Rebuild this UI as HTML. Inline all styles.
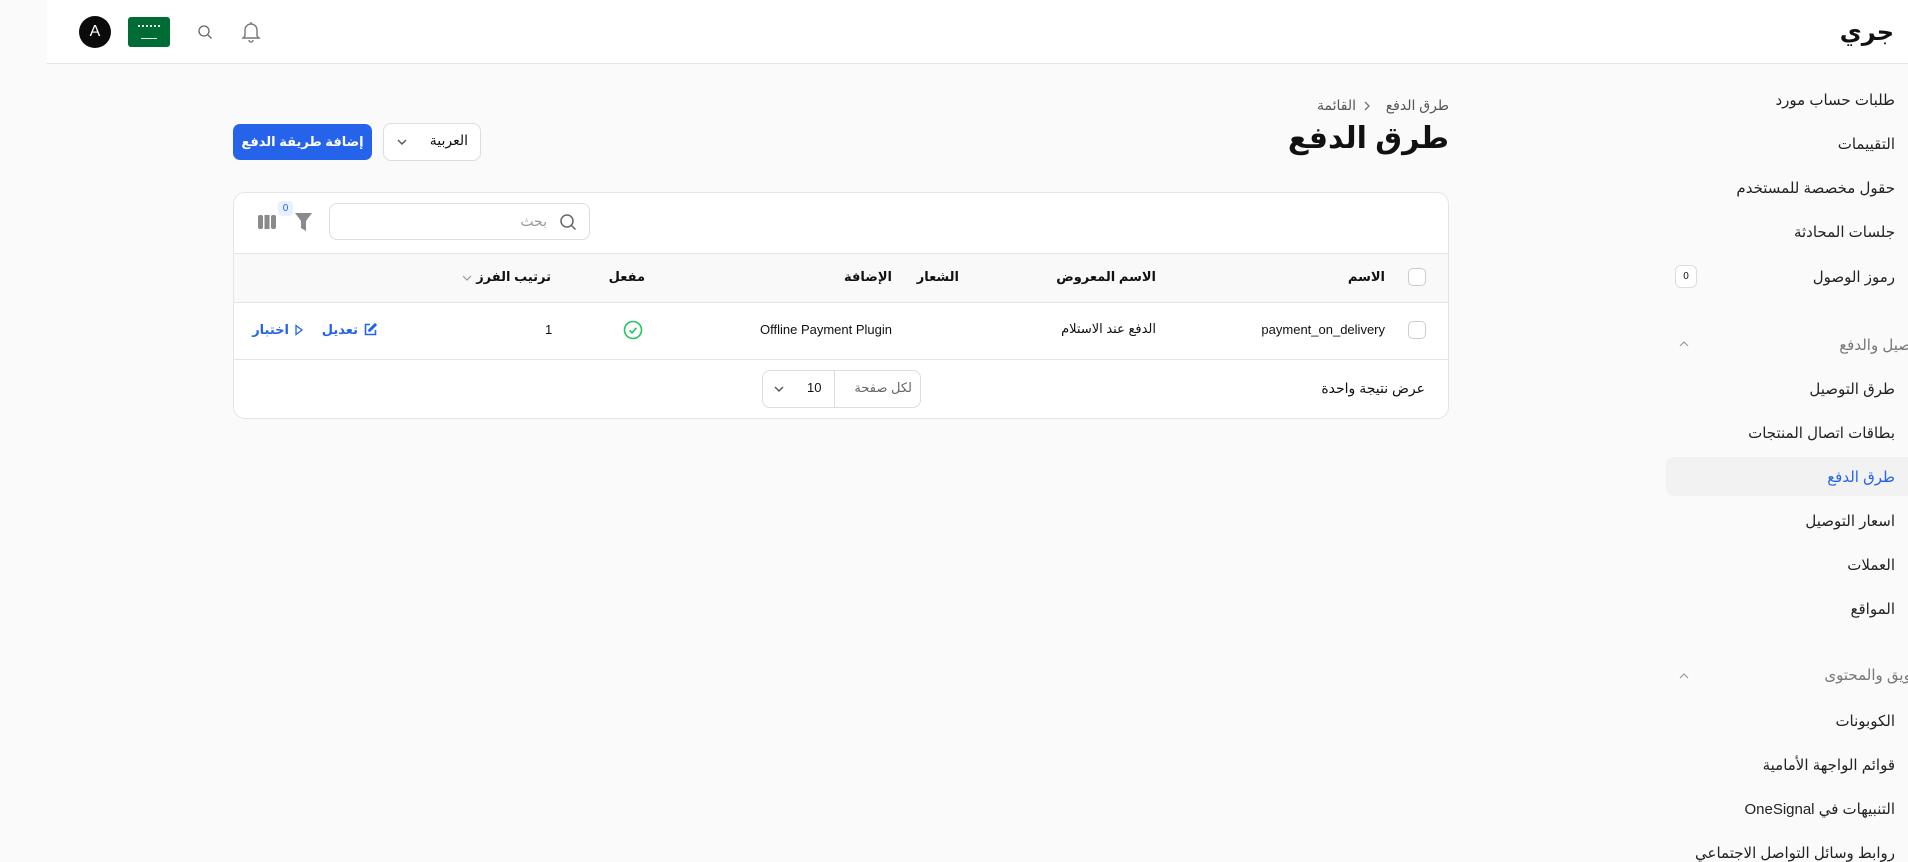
<!DOCTYPE html>
<html><head><meta charset="utf-8"><style>
*{box-sizing:border-box;margin:0;padding:0}
body{width:1908px;height:860px;overflow:hidden;background:#fafafa;font-family:"Liberation Sans","DejaVu Sans",sans-serif;color:#111;position:relative}
.a{position:absolute;white-space:nowrap}
.r{direction:rtl}
.side{font-size:15px;color:#222}
.sec{font-size:15px;color:#777}
.h{font-size:13px;font-weight:bold}
</style></head><body>
<div class="a" style="left:47px;top:0;width:1861px;height:64px;background:#fff;border-bottom:1px solid #e5e5e5"></div>
<div class="a" style="left:79px;top:16px;width:32px;height:32px;border-radius:50%;background:#0b0b0b;color:#fff;font-size:16px;line-height:32px;text-align:center">A</div>
<div class="a" style="left:128px;top:17px;width:42px;height:30px;border-radius:3px;background:#006c35">
 <div class="a" style="left:10px;top:8px;width:22px;height:5px;border-top:2px dotted #e8f5ec"></div>
 <div class="a" style="left:13px;top:21px;width:16px;height:1px;background:#e8f5ec"></div>
</div>
<svg class="a" style="left:197px;top:24px" width="16" height="16" viewBox="0 0 16 16" fill="none" stroke="#666" stroke-width="1.3"><circle cx="7" cy="7" r="5"/><path d="M11 11l3.5 3.5"/></svg>
<svg class="a" style="left:241px;top:21px" width="20" height="22" viewBox="0 0 20 22" fill="none" stroke="#777" stroke-width="1.4"><path d="M4 15V9a6 6 0 0 1 12 0v6l2 2H2z"/><path d="M8 19a2 2 0 0 0 4 0"/><path d="M10 1v2"/></svg>
<div class="a r" style="right:14px;top:18px;font-size:24px;font-weight:bold">جري</div>

<div class="a r" style="right:459px;top:97px;font-size:14px;color:#555">طرق الدفع</div>
<svg class="a" style="left:1362px;top:100px" width="10" height="12" viewBox="0 0 10 12" fill="none" stroke="#777" stroke-width="1.3"><path d="M3 2l4 4-4 4"/></svg>
<div class="a r" style="right:552px;top:97px;font-size:14px;color:#555">القائمة</div>
<div class="a r" style="right:459px;top:121px;font-size:30px;font-weight:bold">طرق الدفع</div>

<div class="a" style="left:233px;top:124px;width:139px;height:36px;border-radius:7px;background:#2563eb;color:#fff;font-size:13px;font-weight:bold;line-height:36px;text-align:center;direction:rtl">إضافة طريقة الدفع</div>
<div class="a" style="left:383px;top:123px;width:98px;height:38px;border-radius:8px;background:#fff;border:1px solid #ddd"></div>
<div class="a r" style="right:1440px;top:132px;font-size:14px">العربية</div>
<svg class="a" style="left:396px;top:137px" width="12" height="10" viewBox="0 0 12 10" fill="none" stroke="#555" stroke-width="1.4"><path d="M2 3l4 4 4-4"/></svg>

<div class="a" style="left:233px;top:192px;width:1216px;height:227px;background:#fff;border:1px solid #e5e5e5;border-radius:12px;overflow:hidden">
 <div class="a" style="left:0;top:60px;width:1216px;height:50px;background:#f9f9f9;border-top:1px solid #e5e5e5;border-bottom:1px solid #e5e5e5"></div>
 <div class="a" style="left:0;top:166px;width:1216px;height:1px;background:#e5e5e5"></div>
</div>
<div class="a" style="left:329px;top:203px;width:261px;height:37px;border:1px solid #ddd;border-radius:8px;background:#fff"></div>
<svg class="a" style="left:559px;top:213px" width="18" height="18" viewBox="0 0 18 18" fill="none" stroke="#666" stroke-width="1.5"><circle cx="8" cy="8" r="6"/><path d="M12.5 12.5l4 4"/></svg>
<div class="a r" style="right:1361px;top:213px;font-size:14px;color:#999">بحث</div>
<svg class="a" style="left:258px;top:215px" width="18" height="14" viewBox="0 0 18 14" fill="#8a8a8a"><rect x="0" y="0" width="5" height="14" rx="2"/><rect x="6.5" y="0" width="5" height="14"/><rect x="13" y="0" width="5" height="14" rx="2"/></svg>
<svg class="a" style="left:295px;top:213px" width="17" height="18" viewBox="0 0 17 18" fill="#8a8a8a"><path d="M0 0h17l-6 8v10l-5-3V8z"/></svg>
<div class="a" style="left:278px;top:201px;width:15px;height:15px;border-radius:4px;background:#e8f0fe;color:#2563eb;font-size:10px;line-height:15px;text-align:center">0</div>

<div class="a" style="left:1408px;top:268px;width:18px;height:18px;border:1px solid #ccc;border-radius:5px;background:#fff"></div>
<div class="a r h" style="right:523px;top:269px">الاسم</div>
<div class="a r h" style="right:752px;top:269px">الاسم المعروض</div>
<div class="a r h" style="right:949px;top:269px">الشعار</div>
<div class="a r h" style="right:1016px;top:269px">الإضافة</div>
<div class="a r h" style="right:1263px;top:269px">مفعل</div>
<div class="a r h" style="right:1357px;top:269px">ترتيب الفرز</div>
<svg class="a" style="left:462px;top:274px" width="10" height="8" viewBox="0 0 10 8" fill="none" stroke="#999" stroke-width="1.2"><path d="M1 2l4 4 4-4"/></svg>

<div class="a" style="left:1408px;top:321px;width:18px;height:18px;border:1px solid #ccc;border-radius:5px;background:#fff"></div>
<div class="a" style="right:523px;top:322px;font-size:13px">payment_on_delivery</div>
<div class="a r" style="right:752px;top:321px;font-size:13px">الدفع عند الاستلام</div>
<div class="a" style="right:1016px;top:322px;font-size:13px">Offline Payment Plugin</div>
<svg class="a" style="left:623px;top:320px" width="20" height="20" viewBox="0 0 20 20" fill="none" stroke="#22c55e" stroke-width="1.6"><circle cx="10" cy="10" r="8.5"/><path d="M6.5 10.3l2.5 2.5 4.5-5"/></svg>
<div class="a" style="left:545px;top:322px;font-size:13px">1</div>
<svg class="a" style="left:364px;top:323px" width="13" height="13" viewBox="0 0 13 13" fill="none" stroke="#2563eb" stroke-width="1.6"><path d="M6 1.5H1.5v10h10V7"/><path d="M11 1l1 1-6 6H5V7z" fill="#2563eb"/></svg>
<div class="a r h" style="right:1550px;top:322px;color:#2563eb">تعديل</div>
<svg class="a" style="left:294px;top:324px" width="10" height="12" viewBox="0 0 10 12" fill="none" stroke="#2563eb" stroke-width="1.3"><path d="M2 1.5l6 4.5-6 4.5z"/></svg>
<div class="a r h" style="right:1619px;top:322px;color:#2563eb">اختبار</div>

<div class="a r" style="right:483px;top:380px;font-size:14px">عرض نتيجة واحدة</div>
<div class="a" style="left:762px;top:370px;width:159px;height:38px;border:1px solid #ddd;border-radius:8px;background:#fff">
 <div class="a" style="left:71px;top:0;width:1px;height:36px;background:#ddd"></div>
</div>
<div class="a r" style="right:996px;top:380px;font-size:13px;color:#666">لكل صفحة</div>
<div class="a" style="left:807px;top:380px;font-size:13px">10</div>
<svg class="a" style="left:773px;top:384px" width="12" height="10" viewBox="0 0 12 10" fill="none" stroke="#555" stroke-width="1.4"><path d="M2 3l4 4 4-4"/></svg>

<div class="a side r" style="right:13px;top:91px">طلبات حساب مورد</div>
<div class="a side r" style="right:13px;top:135px">التقييمات</div>
<div class="a side r" style="right:13px;top:179px">حقول مخصصة للمستخدم</div>
<div class="a side r" style="right:13px;top:223px">جلسات المحادثة</div>
<div class="a side r" style="right:13px;top:268px">رموز الوصول</div>
<div class="a" style="left:1675px;top:265px;width:22px;height:23px;border:1px solid #ddd;border-radius:6px;background:#fff;font-size:10px;line-height:21px;text-align:center">0</div>

<div class="a sec r" style="right:-24px;top:336px">التوصيل والدفع</div>
<svg class="a" style="left:1678px;top:340px" width="12" height="8" viewBox="0 0 12 8" fill="none" stroke="#999" stroke-width="1.2"><path d="M2 6l4-4 4 4"/></svg>
<div class="a side r" style="right:13px;top:380px">طرق التوصيل</div>
<div class="a side r" style="right:13px;top:424px">بطاقات اتصال المنتجات</div>
<div class="a" style="left:1666px;top:457px;width:260px;height:39px;border-radius:8px;background:#f2f2f2"></div>
<div class="a side r" style="right:13px;top:468px;color:#2563eb">طرق الدفع</div>
<div class="a side r" style="right:13px;top:512px">اسعار التوصيل</div>
<div class="a side r" style="right:13px;top:556px">العملات</div>
<div class="a side r" style="right:13px;top:600px">المواقع</div>

<div class="a sec r" style="right:-30px;top:666px">التسويق والمحتوى</div>
<svg class="a" style="left:1678px;top:672px" width="12" height="8" viewBox="0 0 12 8" fill="none" stroke="#999" stroke-width="1.2"><path d="M2 6l4-4 4 4"/></svg>
<div class="a side r" style="right:13px;top:712px">الكوبونات</div>
<div class="a side r" style="right:13px;top:756px">قوائم الواجهة الأمامية</div>
<div class="a side r" style="right:13px;top:800px">التنبيهات في OneSignal</div>
<div class="a side r" style="right:13px;top:844px">روابط وسائل التواصل الاجتماعي</div>
</body></html>
